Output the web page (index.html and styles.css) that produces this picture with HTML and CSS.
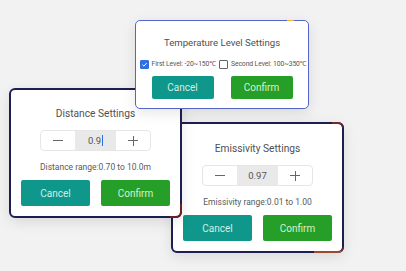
FILE: index.html
```html
<!DOCTYPE html>
<html>
<head>
<meta charset="utf-8">
<link rel="stylesheet" href="styles.css">
</head>
<body>
<div class="desk">
  <div class="card card-emis">
    <div class="title">Emissivity Settings</div>
    <div class="stepper">
      <span class="step-btn"><span class="minus"></span></span>
      <span class="step-val">0.97</span>
      <span class="step-btn"><span class="plus"></span></span>
    </div>
    <div class="range">Emissivity range:0.01 to 1.00</div>
    <div class="actions">
      <button class="btn btn-cancel">Cancel</button>
      <button class="btn btn-confirm">Confirm</button>
    </div>
    <span class="glow glow-emis-top"></span>
    <span class="glow glow-emis-bottom"></span>
  </div>

  <div class="card card-dist">
    <div class="title">Distance Settings</div>
    <div class="stepper">
      <span class="step-btn"><span class="minus"></span></span>
      <span class="step-val">0.9<span class="caret"></span></span>
      <span class="step-btn"><span class="plus"></span></span>
    </div>
    <div class="range">Distance range:0.70 to 10.0m</div>
    <div class="actions">
      <button class="btn btn-cancel">Cancel</button>
      <button class="btn btn-confirm">Confirm</button>
    </div>
    <span class="glow glow-dist"></span>
  </div>

  <div class="card card-temp">
    <div class="title">Temperature Level Settings</div>
    <div class="levels">
      <label class="level"><span class="box checked"><svg viewBox="0 0 10 10" width="9" height="9"><path d="M2 5.2 L4.2 7.3 L8.2 2.8" fill="none" stroke="#fff" stroke-width="1.4"/></svg></span>First Level: -20~150℃</label>
      <label class="level"><span class="box"></span>Second Level: 100~350℃</label>
    </div>
    <div class="actions">
      <button class="btn btn-cancel">Cancel</button>
      <button class="btn btn-confirm">Confirm</button>
    </div>
    <span class="glow glow-temp"></span>
  </div>
</div>
</body>
</html>
```
FILE: styles.css
```css
* { box-sizing: border-box; }
html, body { margin: 0; padding: 0; }
body {
  background: #f2f2f2;
  font-family: Roboto, "Noto Sans", sans-serif;
  color: #555;
  width: 406px;
  height: 271px;
  overflow: hidden;
}
.desk { position: relative; width: 406px; height: 271px; }

.card {
  position: absolute;
  background: #fff;
  border: 2px solid #1d1f52;
  border-radius: 6px;
  box-shadow: 0 4px 14px rgba(0,0,0,0.10);
  display: flex;
  flex-direction: column;
  align-items: center;
}
.card-dist { left: 9px; top: 88px; width: 173px; height: 130px; padding-top: 18px; }
.card-emis { left: 171px; top: 122px; width: 173px; height: 131px; padding-top: 19px; }
.card-temp {
  left: 135px; top: 20px; width: 174px; height: 89px; padding-top: 16px;
  border: 1.5px solid #5366c8;
  border-radius: 5px;
  align-items: stretch;
}

.title { font-size: 10.2px; line-height: 12px; color: #505050; text-align: center; }

.stepper {
  margin-top: 10px;
  display: flex;
  height: 21px;
  width: 111px;
  border: 1px solid #e6e6e6;
  border-radius: 4px;
  overflow: hidden;
}
.step-btn { width: 34px; display: flex; align-items: center; justify-content: center; position: relative; }
.step-val {
  flex: 1;
  background: #e9e9e9;
  font-size: 9.5px;
  color: #555;
  display: flex;
  align-items: center;
  justify-content: center;
}
.caret { display: inline-block; width: 1px; height: 11px; background: #2f6fe0; margin-left: 1px; }
.minus, .plus { position: relative; width: 10px; height: 10px; display: block; }
.minus::before, .plus::before {
  content: ""; position: absolute; left: 0; top: 4.5px; width: 10px; height: 1px; background: #666;
}
.plus::after {
  content: ""; position: absolute; left: 4.5px; top: 0; width: 1px; height: 10px; background: #666;
}

.range { margin-top: 10px; font-size: 8.5px; line-height: 12px; color: #5a5a5a; }

.actions { display: flex; gap: 11px; margin-top: 7px; justify-content: center; }
.btn {
  width: 69px; height: 26px;
  border: none; border-radius: 2px;
  font-family: inherit; font-size: 10px;
  color: #d3ede7; padding: 0;
}
.btn-cancel { background: #0e978a; }
.btn-confirm { background: #259f27; color: #d8f0d5; }

.card-temp .title { font-size: 9.6px; }
.levels {
  margin-top: 10px;
  display: flex;
  gap: 3px;
  padding-left: 3.5px;
  white-space: nowrap;
  font-size: 6.8px;
  letter-spacing: -0.1px;
  line-height: 10px;
  color: #555;
}
.level { display: flex; align-items: center; gap: 3px; }
.box {
  width: 9px; height: 9px;
  border: 1px solid #666;
  border-radius: 1px;
  display: inline-flex; align-items: center; justify-content: center;
}
.box.checked { background: #2f6fe0; border-color: #2f6fe0; }
.box.checked svg { display: block; }
.card-temp .actions { gap: 17px; margin-top: 7px; }
.card-temp .btn { width: 62px; height: 23px; }

.glow { position: absolute; pointer-events: none; }
.glow-temp { top: -1.5px; right: 14px; width: 7px; height: 1.5px; background: #f2b23a; }
.glow-dist {
  right: -2px; bottom: -2px; width: 12px; height: 14px;
  border-right: 2px solid #6e1e26; border-bottom: 2px solid #6e1e26;
  border-bottom-right-radius: 6px;
}
.glow-emis-top {
  top: -2px; right: -2px; width: 12px; height: 6px;
  border-top: 2px solid #7a2a26; border-right: 2px solid #4a2240;
  border-top-right-radius: 6px;
}
.glow-emis-bottom {
  right: -2px; bottom: -2px; width: 30px; height: 6px;
  border-bottom: 2px solid #9a4a30; border-right: 2px solid #6e2430;
  border-bottom-right-radius: 6px;
}
```
